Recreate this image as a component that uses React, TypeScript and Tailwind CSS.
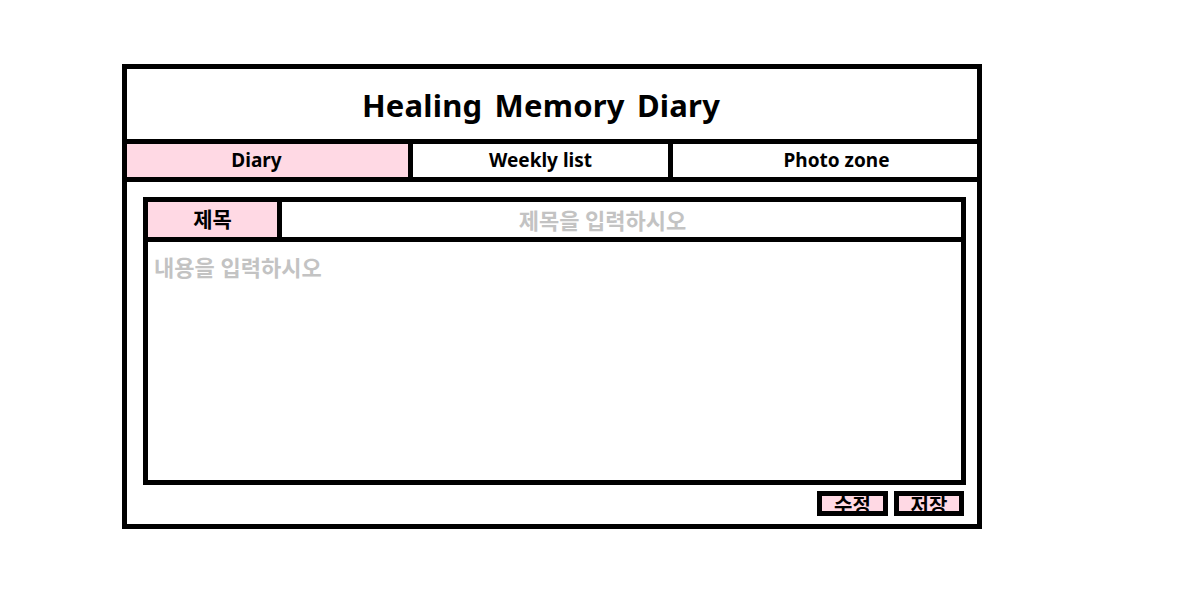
import React, { useState } from 'react';

const font = { fontFamily: '"Noto Sans", "Noto Sans CJK KR", sans-serif' };

export default function App() {
  const [tab, setTab] = useState('diary');
  const [title, setTitle] = useState('');
  const [body, setBody] = useState('');

  const tabs = [
    { id: 'diary', label: 'Diary', cls: 'w-[286px] pr-[22px] border-r-[5px]' },
    { id: 'weekly', label: 'Weekly list', cls: 'w-[260px] border-r-[5px]' },
    { id: 'photo', label: 'Photo zone', cls: 'flex-1 pl-[23px]' },
  ];

  return (
    <div className="w-full h-[609px] bg-white pt-[64px] pl-[122px]" style={font}>
      <div className="w-[860px] h-[465px] border-[5px] border-black flex flex-col">
        <div className="h-[75px] border-b-[5px] border-black flex items-center justify-center pr-[22px] pt-[3px]">
          <h1 className="text-[31px] font-bold text-black tracking-[0.2px] [word-spacing:4px]">Healing Memory Diary</h1>
        </div>
        <div className="h-[38px] border-b-[5px] border-black flex">
          {tabs.map(t => (
            <button
              key={t.id}
              onClick={() => setTab(t.id)}
              className={`${t.cls} border-black h-full flex items-center justify-center text-[19px] font-bold text-black ${tab === t.id ? 'bg-[#ffd9e4]' : 'bg-white'}`}
            >
              {t.label}
            </button>
          ))}
        </div>
        <div className="flex-1 flex flex-col pl-[16px] pr-[11px] pt-[15px]">
          <div className="h-[288px] border-[5px] border-black flex flex-col">
            <div className="h-[40px] border-b-[5px] border-black flex">
              <div className="w-[134px] border-r-[5px] border-black bg-[#ffd9e4] flex items-center justify-center text-[21px] font-bold text-black">
                제목
              </div>
              <input
                value={title}
                onChange={e => setTitle(e.target.value)}
                placeholder="제목을 입력하시오"
                className="flex-1 min-w-0 h-full text-center pr-[38px] text-[22px] font-bold text-black placeholder:text-[#c3c3c3] outline-none bg-white"
              />
            </div>
            <textarea
              value={body}
              onChange={e => setBody(e.target.value)}
              placeholder="내용을 입력하시오"
              className="flex-1 resize-none px-[6px] py-[10px] text-[22px] leading-[30px] font-bold text-black placeholder:text-[#c3c3c3] outline-none bg-white"
            />
          </div>
          <div className="flex justify-end gap-[6px] mt-[6px] pr-[2px]">
            <button className="w-[71px] h-[25px] border-[5px] border-black bg-[#ffd9e4] flex items-center justify-center text-[20px] font-bold text-black leading-none overflow-visible">
              <span className="mt-[4px]">수정</span>
            </button>
            <button className="w-[70px] h-[25px] border-[5px] border-black bg-[#ffd9e4] flex items-center justify-center text-[20px] font-bold text-black leading-none overflow-visible">
              <span className="mt-[4px]">저장</span>
            </button>
          </div>
        </div>
      </div>
    </div>
  );
}
